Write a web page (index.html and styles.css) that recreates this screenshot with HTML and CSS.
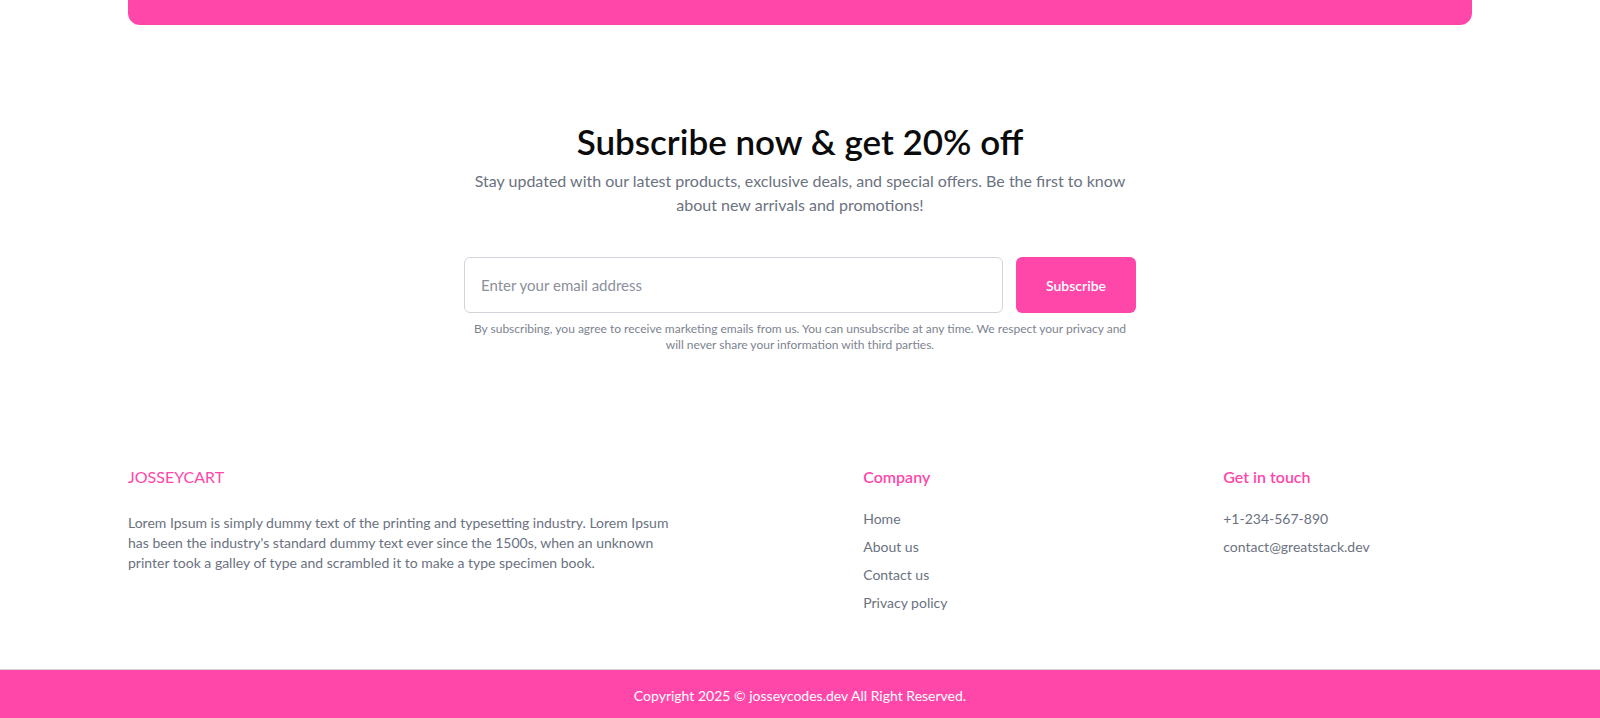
FILE: index.html
```html
<!DOCTYPE html>
<html lang="en">
<head>
<meta charset="utf-8">
<title>JosseyCart</title>
<link rel="stylesheet" href="styles.css">
</head>
<body>
  <div class="banner"></div>

  <section class="newsletter">
    <h1 class="newsletter-title">Subscribe now &amp; get 20% off</h1>
    <p class="newsletter-lead">Stay updated with our latest products, exclusive deals, and special offers. Be the first to know about new arrivals and promotions!</p>
    <form class="newsletter-form">
      <input class="newsletter-input" type="email" placeholder="Enter your email address">
      <button class="newsletter-button" type="button">Subscribe</button>
    </form>
    <p class="newsletter-fine">By subscribing, you agree to receive marketing emails from us. You can unsubscribe at any time. We respect your privacy and will never share your information with third parties.</p>
  </section>

  <footer class="footer">
    <div class="footer-brand">
      <div class="footer-logo">JOSSEYCART</div>
      <p class="footer-about">Lorem Ipsum is simply dummy text of the printing and typesetting industry. Lorem Ipsum has been the industry's standard dummy text ever since the 1500s, when an unknown printer took a galley of type and scrambled it to make a type specimen book.</p>
    </div>
    <div class="footer-col">
      <div>
        <h2 class="footer-heading">Company</h2>
        <ul class="footer-list">
          <li><a href="#">Home</a></li>
          <li><a href="#">About us</a></li>
          <li><a href="#">Contact us</a></li>
          <li><a href="#">Privacy policy</a></li>
        </ul>
      </div>
    </div>
    <div class="footer-col">
      <div>
        <h2 class="footer-heading">Get in touch</h2>
        <ul class="footer-list">
          <li>+1-234-567-890</li>
          <li>contact@greatstack.dev</li>
        </ul>
      </div>
    </div>
  </footer>

  <div class="copyright">Copyright 2025 © josseycodes.dev All Right Reserved.</div>
</body>
</html>
```

FILE: styles.css
```css
* {
  box-sizing: border-box;
}

html, body {
  margin: 0;
  padding: 0;
}

body {
  font-family: "Lato", "Open Sans", sans-serif;
  color: #6b7280;
  background: #ffffff;
}

.banner {
  height: 25px;
  margin: 0 128px;
  background: #ff47aa;
  border-radius: 0 0 12px 12px;
}

.newsletter {
  display: flex;
  flex-direction: column;
  align-items: center;
  text-align: center;
  padding: 96px 0 56px;
}

.newsletter-title {
  margin: 0;
  font-size: 35px;
  line-height: 40px;
  font-weight: 600;
  color: #0b0b0b;
}

.newsletter-lead {
  margin: 8px 0 0;
  max-width: 672px;
  font-size: 16px;
  line-height: 24px;
  color: #6b7280;
}

.newsletter-form {
  display: flex;
  gap: 13px;
  width: 672px;
  height: 56px;
  margin: 40px 0 0;
}

.newsletter-input {
  flex: 1;
  min-width: 0;
  height: 100%;
  padding: 0 16px;
  border: 1px solid #d1d5db;
  border-radius: 6px;
  font-family: inherit;
  font-size: 15px;
  color: #374151;
  outline: none;
}

.newsletter-input::placeholder {
  color: #8b909b;
}

.newsletter-button {
  width: 120px;
  height: 100%;
  border: none;
  border-radius: 6px;
  background: #ff47aa;
  color: #ffffff;
  font-family: inherit;
  font-size: 14px;
  font-weight: 600;
  cursor: pointer;
}

.newsletter-fine {
  margin: 8px 0 0;
  max-width: 672px;
  font-size: 12px;
  line-height: 16px;
  color: #7d8390;
}

.footer {
  display: flex;
  align-items: flex-start;
  gap: 40px;
  padding: 56px 128px;
  border-bottom: 1px solid rgba(107, 114, 128, 0.3);
}

.footer-brand {
  width: 80%;
}

.footer-col {
  width: 50%;
  display: flex;
  justify-content: center;
}

.footer-logo {
  font-size: 16px;
  line-height: 24px;
  color: #ff47aa;
}

.footer-about {
  margin: 24px 0 0;
  max-width: 545px;
  font-size: 14px;
  line-height: 20px;
  color: #6b7280;
}

.footer-heading {
  margin: 0 0 20px;
  font-size: 16px;
  line-height: 24px;
  font-weight: 600;
  color: #ff47aa;
}

.footer-list {
  list-style: none;
  margin: 0;
  padding: 0;
  font-size: 14px;
  line-height: 20px;
  color: #6b7280;
}

.footer-list li + li {
  margin-top: 8px;
}

.footer-list a {
  color: inherit;
  text-decoration: none;
}

.copyright {
  background: #ff47aa;
  color: #ffffff;
  text-align: center;
  padding: 16px 0;
  font-size: 14px;
  line-height: 20px;
}
```
